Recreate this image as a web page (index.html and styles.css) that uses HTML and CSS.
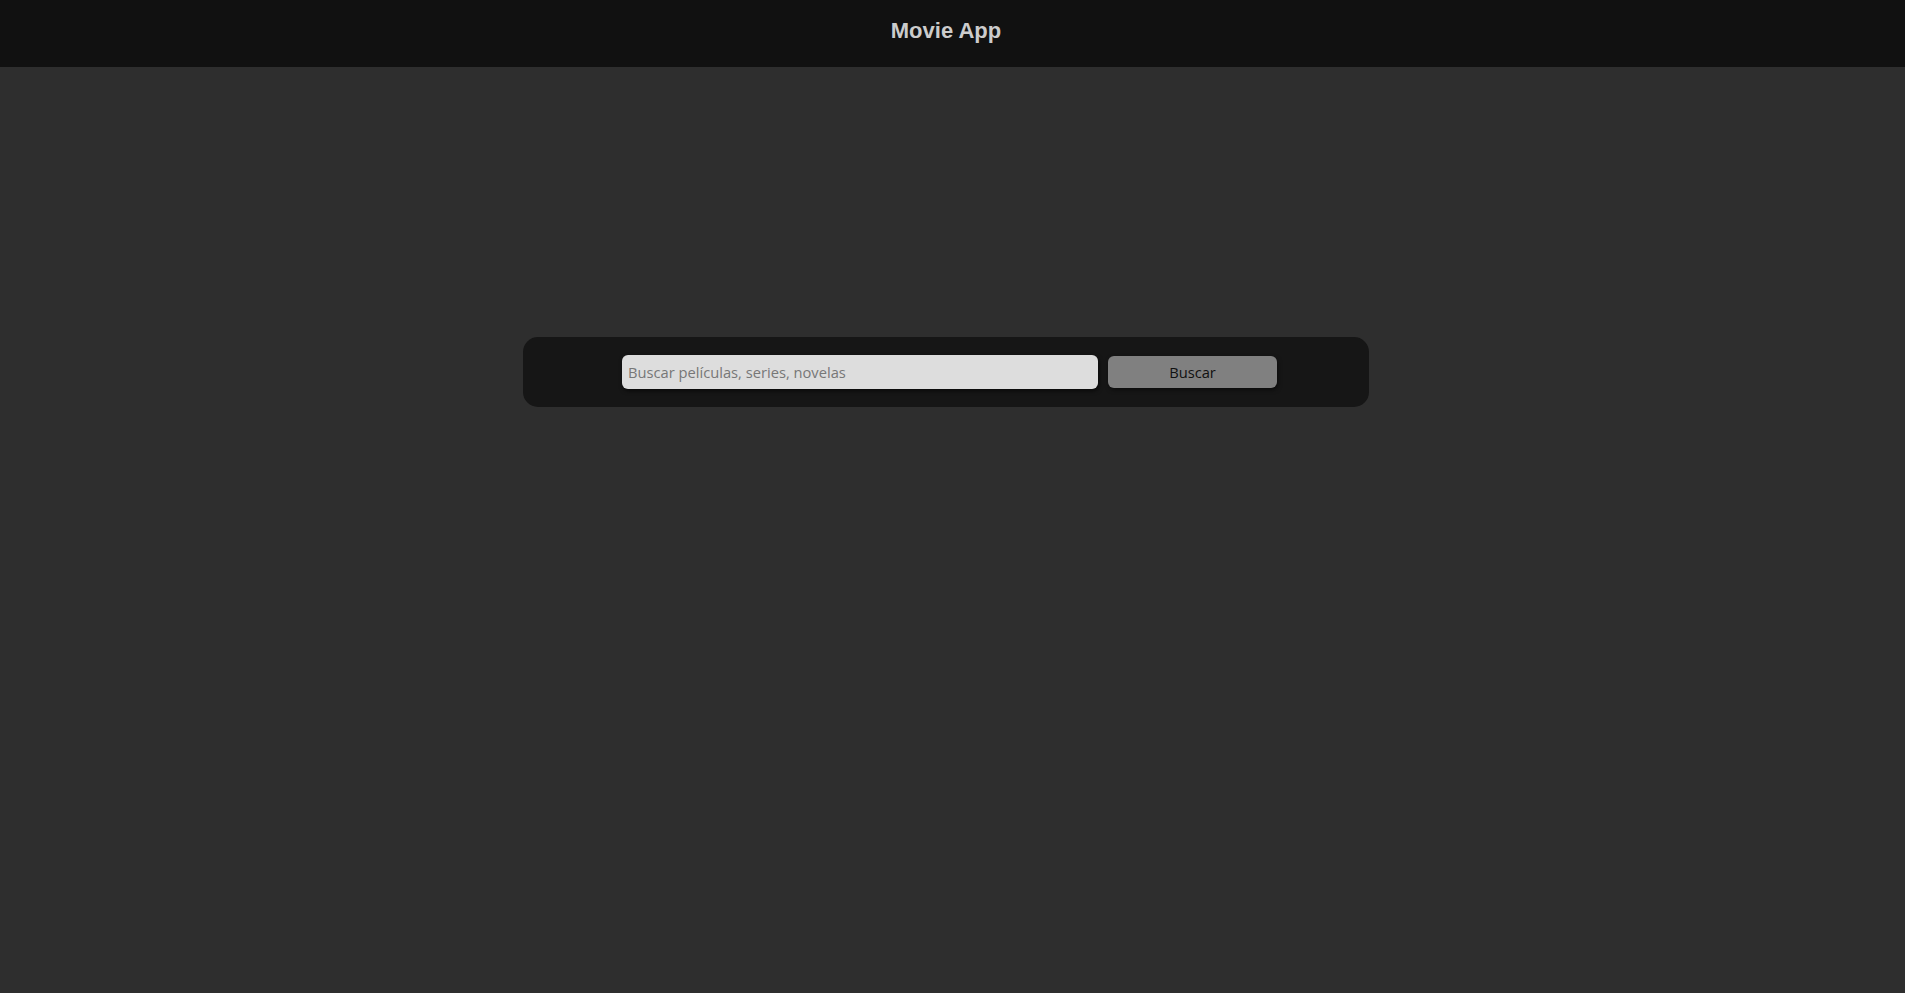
FILE: index.html
```html
<!DOCTYPE html>
<html lang="es">
<head>
<meta charset="utf-8">
<title>Movie App</title>
<link rel="stylesheet" href="styles.css">
</head>
<body>
<header class="topbar">
  <h1 class="brand">Movie App</h1>
</header>
<main class="main">
  <form class="search" onsubmit="return false">
    <input class="search-input" type="text" placeholder="Buscar películas, series, novelas">
    <button class="search-btn" type="submit">Buscar</button>
  </form>
</main>
</body>
</html>
```
FILE: styles.css
```css
html, body {
  margin: 0;
  padding: 0;
  height: 100%;
}
body {
  background: #2e2e2e;
  font-family: "Open Sans", "Noto Sans", sans-serif;
}
.topbar {
  box-sizing: border-box;
  height: 67px;
  background: #111111;
  display: flex;
  align-items: center;
  justify-content: center;
  padding-right: 13px;
  padding-bottom: 6px;
}
.brand {
  margin: 0;
  font-family: "Liberation Sans", Arial, sans-serif;
  font-size: 22px;
  font-weight: bold;
  color: #cccccc;
  line-height: 1;
}
.main {
  padding-top: 270px;
}
.search {
  box-sizing: border-box;
  width: 846px;
  height: 70px;
  margin-left: 523px;
  background: #161616;
  border-radius: 15px;
  display: flex;
  align-items: center;
  gap: 10px;
  padding-left: 99px;
}
.search-input {
  box-sizing: border-box;
  width: 476px;
  height: 34px;
  border: none;
  outline: none;
  border-radius: 6px;
  background: #dddddd;
  padding: 0 6px;
  font-family: "Open Sans", "Noto Sans", sans-serif;
  font-size: 14.7px;
  color: #222;
  box-shadow: 1px 2px 4px rgba(0, 0, 0, 0.6);
}
.search-input::placeholder {
  color: #777777;
}
.search-btn {
  box-sizing: border-box;
  width: 169px;
  height: 32px;
  border: none;
  border-radius: 6px;
  background: #808080;
  color: #111111;
  font-family: "Open Sans", "Noto Sans", sans-serif;
  font-size: 14.7px;
  cursor: pointer;
  box-shadow: 1px 2px 4px rgba(0, 0, 0, 0.5);
}
```
